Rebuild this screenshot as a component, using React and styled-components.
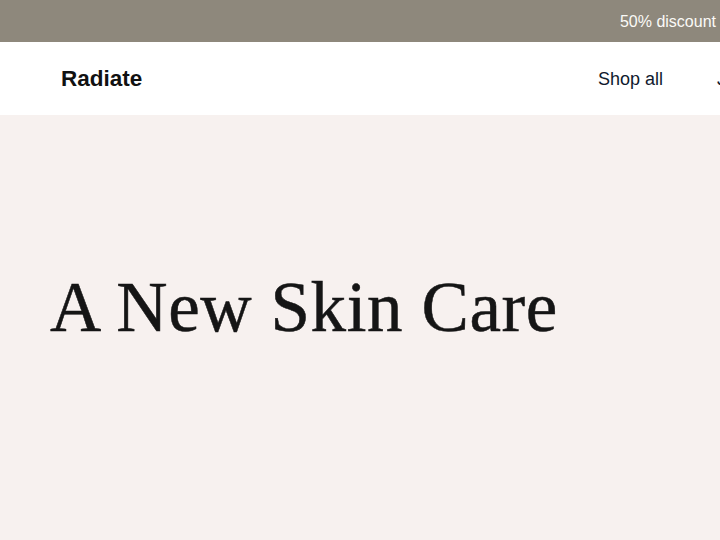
import React from 'react'
import styled, { createGlobalStyle } from 'styled-components'

const Global = createGlobalStyle`
	html, body {
		margin: 0;
		padding: 0;
		background: #f7f1ef;
		font-family: 'Liberation Sans', Arial, sans-serif;
		overflow: hidden;
	}
`

const Announcement = styled.div`
	height: 42px;
	background: #8e887c;
	display: flex;
	align-items: center;
	justify-content: flex-end;
	padding: 2px 4px 0 0;
	box-sizing: border-box;
	color: #fbfaf7;
	font-size: 16px;
	white-space: nowrap;
	overflow: hidden;
`

const Header = styled.header`
	height: 73px;
	background: #ffffff;
	display: flex;
	align-items: center;
	padding-left: 61px;
	white-space: nowrap;
	overflow: hidden;
`

const Logo = styled.div`
	font-size: 22.5px;
	font-weight: 700;
	color: #111111;
	flex: 1;
`

const Nav = styled.nav`
	display: flex;
	gap: 54px;
	margin-right: -56px;
	padding-top: 2px;
`

const NavLink = styled.a`
	font-size: 18px;
	color: #0f1a2e;
	text-decoration: none;
`

const Hero = styled.section`
	height: 425px;
	background: #f7f1ef;
	padding: 157px 0 0 50px;
	box-sizing: border-box;
`

const Title = styled.h1`
	margin: 0;
	font-family: Georgia, 'Liberation Serif', 'DejaVu Serif', serif;
	font-weight: 400;
	font-size: 71px;
	letter-spacing: 0.6px;
	color: #151515;
	line-height: 1;
	-webkit-text-stroke: 0.5px #151515;
`

export default function App() {
	return (
		<>
			<Global />
			<Announcement>50% discount</Announcement>
			<Header>
				<Logo>Radiate</Logo>
				<Nav>
					<NavLink href="#">Shop all</NavLink>
					<NavLink href="#">Journal</NavLink>
				</Nav>
			</Header>
			<Hero>
				<Title>A New Skin Care</Title>
			</Hero>
		</>
	)
}
